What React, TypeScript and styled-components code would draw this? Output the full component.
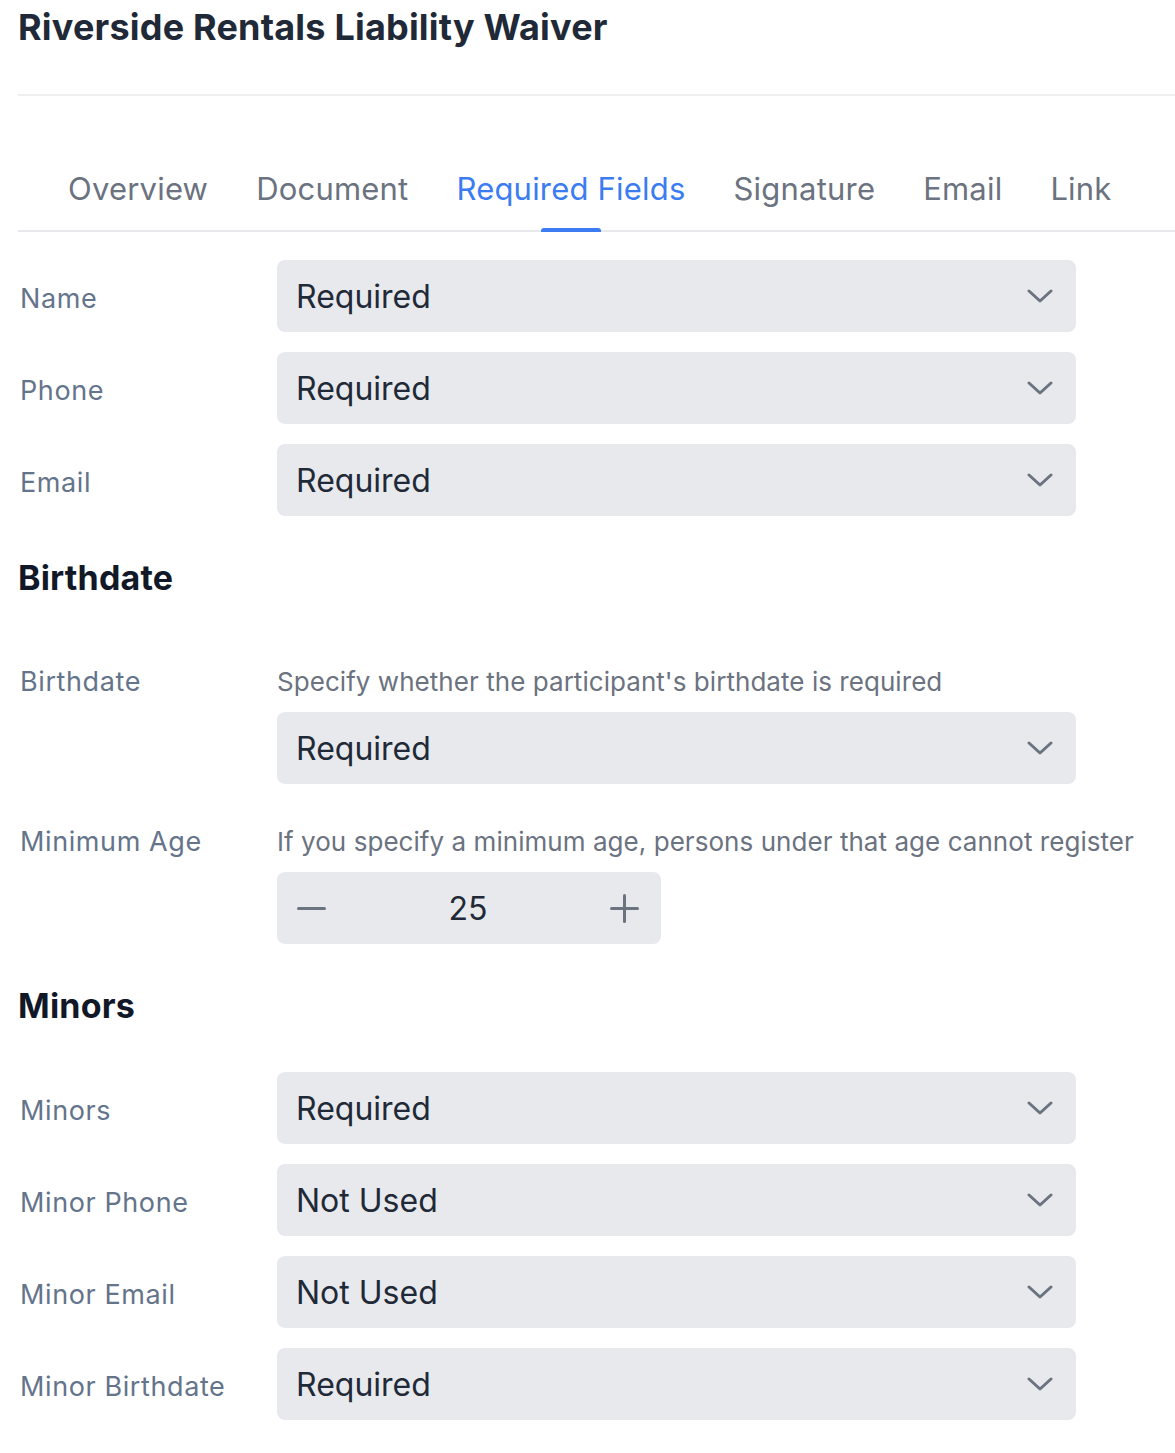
import React from "react";
import styled, { createGlobalStyle } from "styled-components";

const GlobalStyle = createGlobalStyle`
  html, body { margin: 0; padding: 0; background: #ffffff; }
  body { font-family: Inter, "Noto Sans", "Liberation Sans", sans-serif; -webkit-font-smoothing: antialiased; }
  * { box-sizing: border-box; }
`;

const Page = styled.div`
  padding: 0 0 33px 18px;
  width: 1175px;
`;

const Header = styled.header`
  padding-top: 6px;
  padding-bottom: 46px;
  border-bottom: 2px solid #eeeff1;
`;

const Title = styled.h1`
  margin: 0;
  font-size: 36px;
  line-height: 42px;
  font-weight: 700;
  color: #1f2937;
  letter-spacing: 0.2px;
`;

const TabList = styled.nav`
  display: flex;
  gap: 48px;
  margin-top: 75px;
  padding-left: 50px;
  border-bottom: 2px solid #e8e9ec;
`;

const Tab = styled.div<{ $active?: boolean }>`
  position: relative;
  font-size: 31px;
  line-height: 36px;
  letter-spacing: 0.2px;
  padding-bottom: 23px;
  color: ${(p) => (p.$active ? "#3b7cf3" : "#6b7280")};
  &::after {
    content: "";
    display: ${(p) => (p.$active ? "block" : "none")};
    position: absolute;
    left: 50%;
    bottom: -2px;
    width: 60px;
    height: 4px;
    margin-left: -30px;
    border-radius: 3px 3px 0 0;
    background: #3b7cf3;
  }
`;

const Form = styled.div`
  display: flex;
  flex-direction: column;
  gap: 20px;
  padding-top: 28px;
`;

const Row = styled.div<{ $described?: boolean }>`
  display: grid;
  grid-template-columns: 259px 799px;
  align-items: ${(p) => (p.$described ? "start" : "center")};
  padding-top: ${(p) => (p.$described ? "22px" : "0")};
`;

const Label = styled.div<{ $described?: boolean }>`
  font-size: 27px;
  line-height: 32px;
  letter-spacing: 0.6px;
  color: #64748b;
  padding-left: 2px;
  padding-top: ${(p) => (p.$described ? "0" : "6px")};
`;

const Field = styled.div`
  display: flex;
  flex-direction: column;
  gap: 14px;
`;

const Description = styled.div`
  font-size: 26px;
  line-height: 32px;
  letter-spacing: 0.05px;
  color: #6b7280;
  white-space: nowrap;
`;

const Select = styled.div`
  display: flex;
  align-items: center;
  justify-content: space-between;
  height: 72px;
  width: 799px;
  padding: 0 23px 0 19px;
  background: #e8e9ed;
  border-radius: 8px;
  font-size: 32px;
  color: #1f2937;
`;

const Stepper = styled.div`
  display: flex;
  align-items: center;
  justify-content: space-between;
  width: 384px;
  height: 72px;
  padding: 0 22px 0 20px;
  background: #e8e9ed;
  border-radius: 8px;
`;

const StepValue = styled.span`
  font-size: 32px;
  color: #1f2937;
`;

const IconButton = styled.span`
  display: flex;
  width: 29px;
  height: 29px;
  align-items: center;
  justify-content: center;
`;

const SectionHeading = styled.h2`
  margin: 22px 0 26px;
  font-size: 34px;
  line-height: 40px;
  font-weight: 700;
  color: #111827;
  letter-spacing: 0.2px;
`;

const Chevron = () => (
  <svg width="26" height="14" viewBox="0 0 26 14" fill="none">
    <polyline points="2,2 13,12 24,2" stroke="#6b7280" strokeWidth="3" strokeLinecap="round" strokeLinejoin="round" />
  </svg>
);

const Minus = () => (
  <svg width="29" height="29" viewBox="0 0 29 29" fill="none">
    <line x1="1.5" y1="14.5" x2="27.5" y2="14.5" stroke="#6b7280" strokeWidth="3" strokeLinecap="round" />
  </svg>
);

const Plus = () => (
  <svg width="29" height="29" viewBox="0 0 29 29" fill="none">
    <line x1="1.5" y1="14.5" x2="27.5" y2="14.5" stroke="#6b7280" strokeWidth="3" strokeLinecap="round" />
    <line x1="14.5" y1="1.5" x2="14.5" y2="27.5" stroke="#6b7280" strokeWidth="3" strokeLinecap="round" />
  </svg>
);

const SelectBox = ({ value }: { value: string }) => (
  <Select>
    <span>{value}</span>
    <Chevron />
  </Select>
);

const SimpleRow = ({ label, value }: { label: string; value: string }) => (
  <Row>
    <Label>{label}</Label>
    <SelectBox value={value} />
  </Row>
);

const tabs = ["Overview", "Document", "Required Fields", "Signature", "Email", "Link"];

export default function App() {
  return (
    <>
      <GlobalStyle />
      <Page>
        <Header>
          <Title>Riverside Rentals Liability Waiver</Title>
        </Header>
        <TabList>
          {tabs.map((t) => (
            <Tab key={t} $active={t === "Required Fields"}>
              {t}
            </Tab>
          ))}
        </TabList>
        <Form>
          <SimpleRow label="Name" value="Required" />
          <SimpleRow label="Phone" value="Required" />
          <SimpleRow label="Email" value="Required" />

          <SectionHeading>Birthdate</SectionHeading>
          <Row $described>
            <Label $described>Birthdate</Label>
            <Field>
              <Description>Specify whether the participant's birthdate is required</Description>
              <SelectBox value="Required" />
            </Field>
          </Row>
          <Row $described>
            <Label $described>Minimum Age</Label>
            <Field>
              <Description>If you specify a minimum age, persons under that age cannot register</Description>
              <Stepper>
                <IconButton>
                  <Minus />
                </IconButton>
                <StepValue>25</StepValue>
                <IconButton>
                  <Plus />
                </IconButton>
              </Stepper>
            </Field>
          </Row>

          <SectionHeading>Minors</SectionHeading>
          <SimpleRow label="Minors" value="Required" />
          <SimpleRow label="Minor Phone" value="Not Used" />
          <SimpleRow label="Minor Email" value="Not Used" />
          <SimpleRow label="Minor Birthdate" value="Required" />
        </Form>
      </Page>
    </>
  );
}
